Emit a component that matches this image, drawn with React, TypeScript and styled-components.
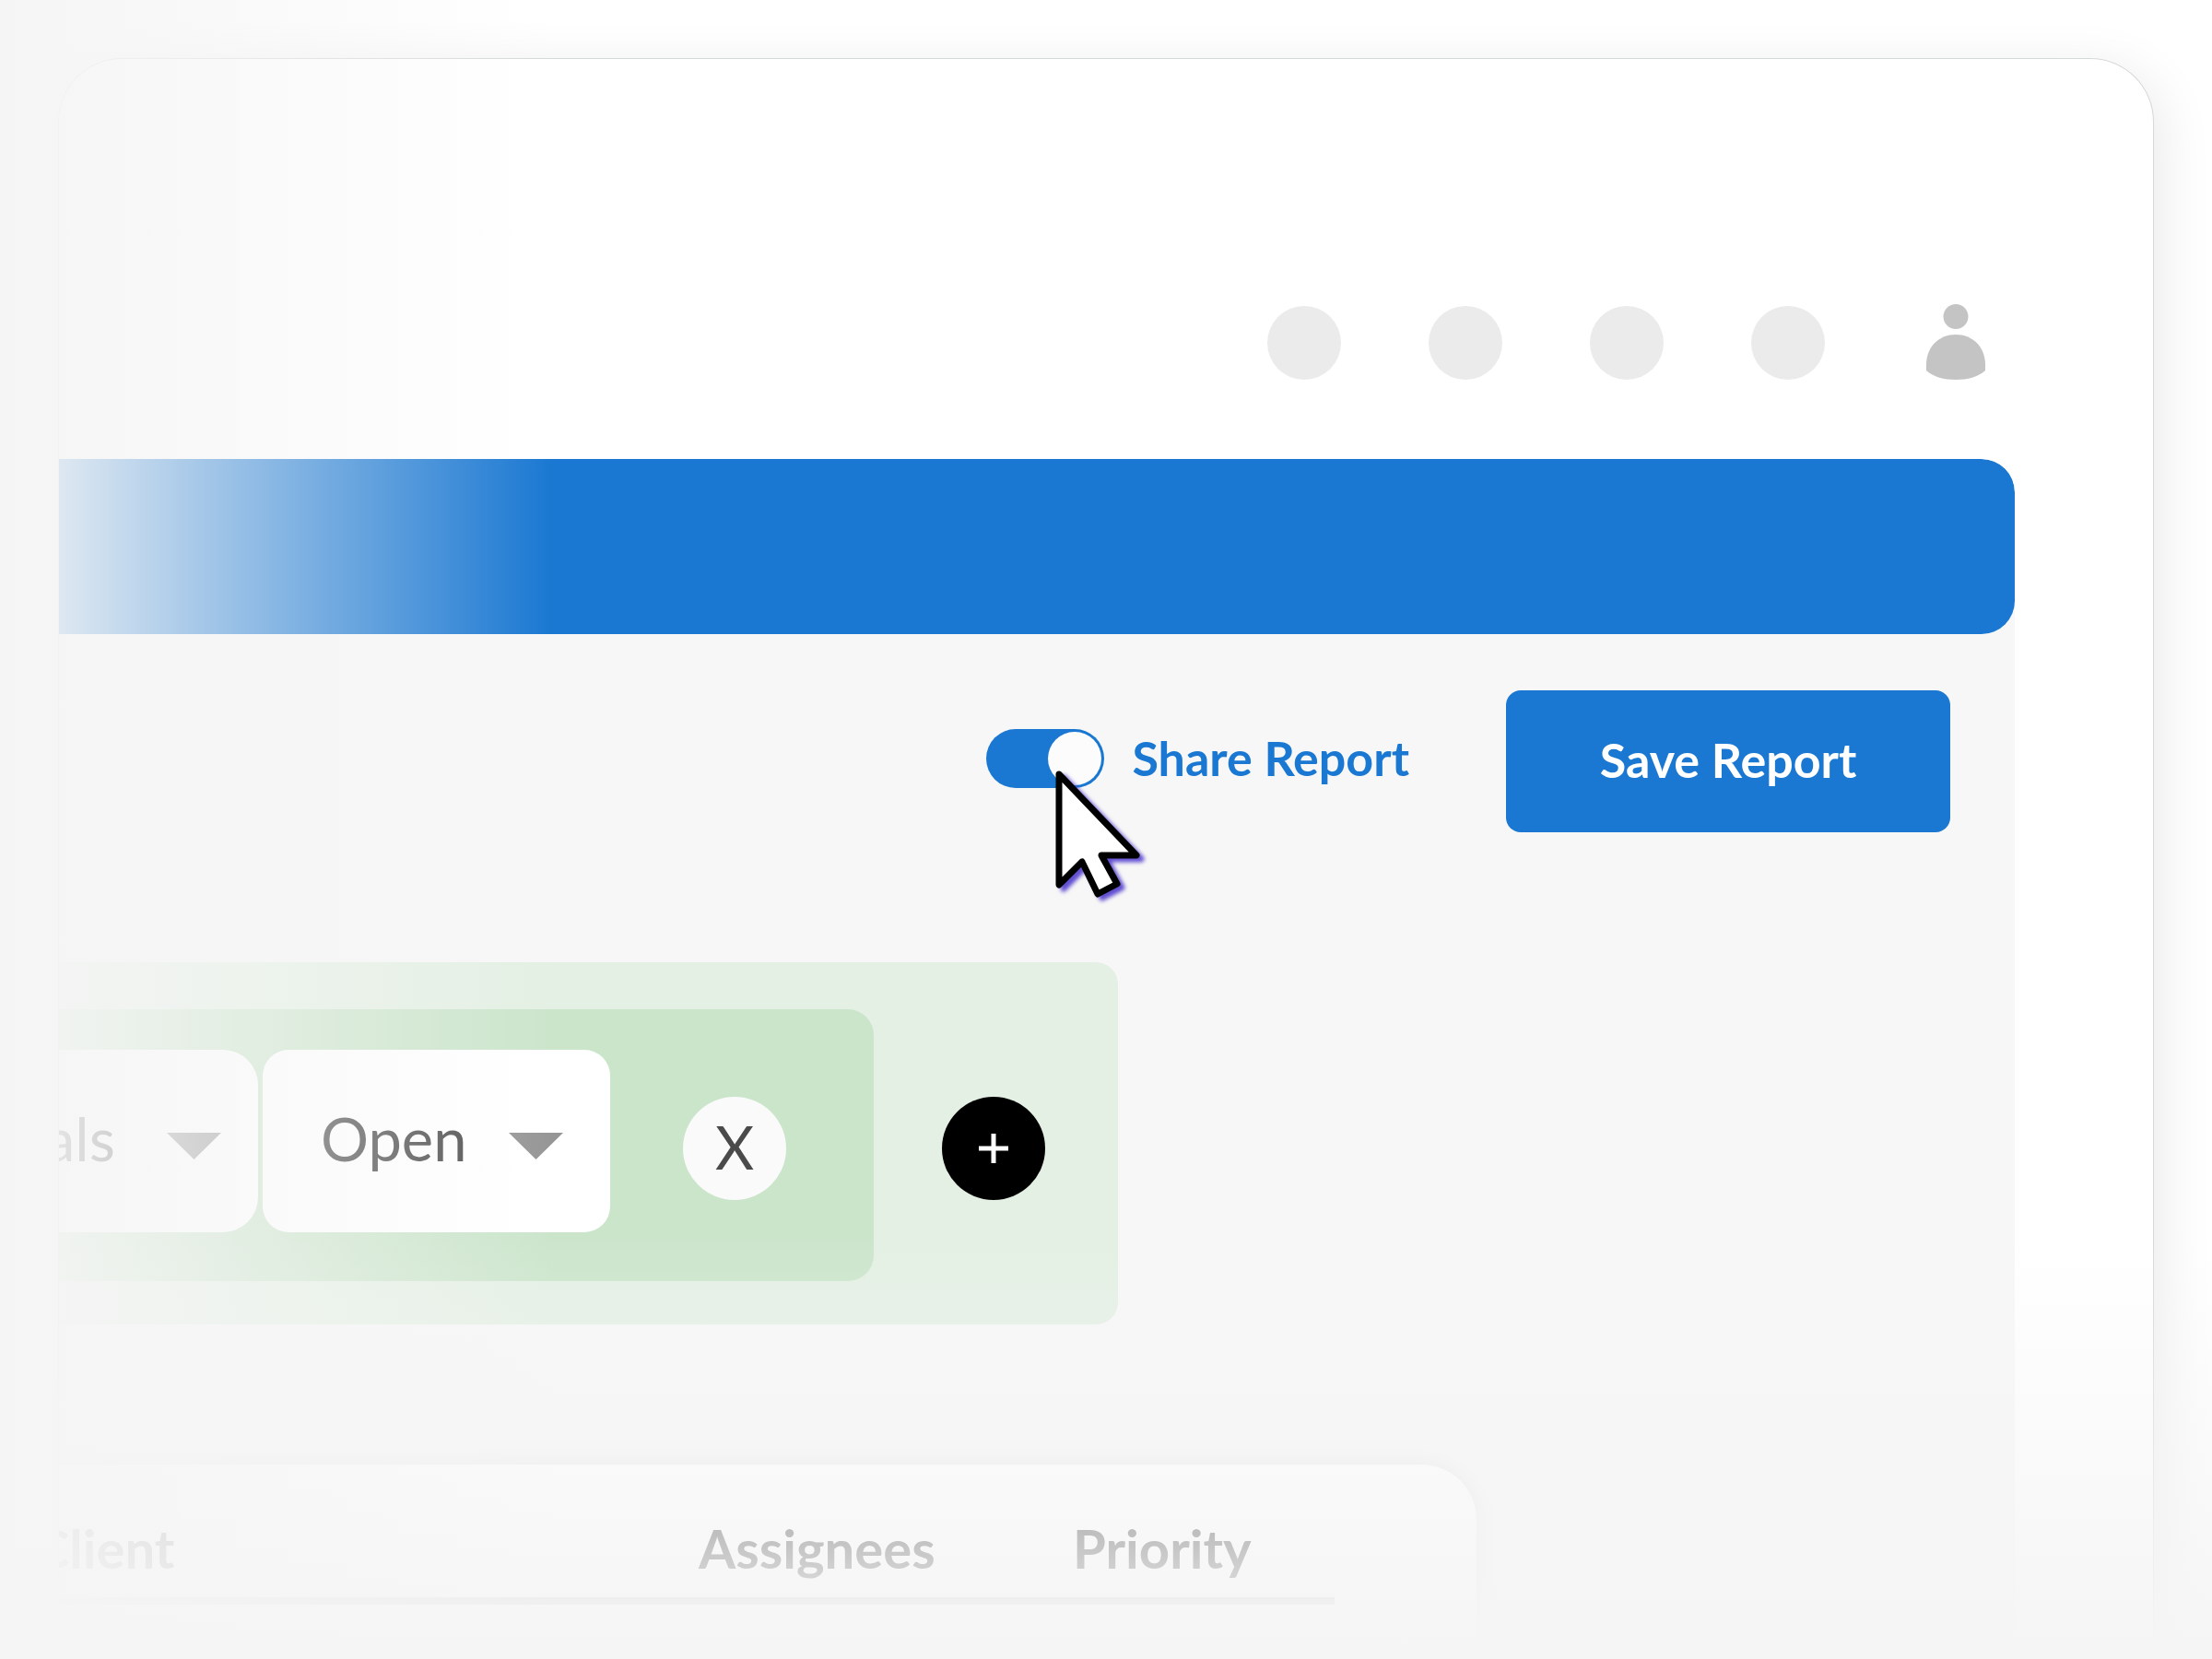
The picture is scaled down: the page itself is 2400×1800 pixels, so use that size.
import React, { useState } from "react";
import styled, { createGlobalStyle } from "styled-components";

const BLUE = "#1a78d2";
const HAZE = "245, 245, 245";

const GlobalStyle = createGlobalStyle`
  *, *::before, *::after { box-sizing: border-box; }
  body {
    margin: 0;
    background: #ffffff;
    font-family: Lato, "Open Sans", sans-serif;
  }
  button, select, input { font: inherit; }
`;

const Page = styled.div`
  position: relative;
  display: flex;
  min-height: 100vh;
  padding: 64px 64px 0;
  overflow: hidden;
`;

const Fade = styled.div`
  position: absolute;
  inset: 0;
  pointer-events: none;
  background:
    linear-gradient(to top, rgb(${HAZE}) 10px, rgba(${HAZE}, 0) 460px),
    linear-gradient(to right, rgb(${HAZE}), rgba(${HAZE}, 0) 600px);
`;

const Window = styled.div`
  flex: 1;
  min-width: 0;
  display: flex;
  flex-direction: column;
  background: #ffffff;
  border-radius: 68px 68px 0 0;
  box-shadow: 0 0 0 1px #d6d9d9, 8px 12px 60px rgba(0, 0, 0, 0.09);
`;

const Header = styled.header`
  display: flex;
  justify-content: flex-end;
  align-items: flex-end;
  gap: 95px;
  padding: 266px 182px 86px 0;
`;

const Dot = styled.span`
  width: 80px;
  height: 80px;
  border-radius: 50%;
  background: #ebebeb;
`;

const PersonIcon = styled.svg`
  width: 64px;
  height: 82px;
  margin-left: 15px;
  fill: #c4c4c4;
`;

const Panel = styled.main`
  flex: 1;
  display: flex;
  flex-direction: column;
  align-items: flex-start;
  margin-right: 150px;
  border-top-right-radius: 36px;
  background: #f7f7f7;
  overflow: hidden;
`;

const Banner = styled.div`
  align-self: stretch;
  height: 190px;
  border-radius: 0 36px 36px 0;
  background: ${BLUE};
`;

const Toolbar = styled.div`
  align-self: stretch;
  display: flex;
  justify-content: flex-end;
  align-items: center;
  gap: 105px;
  padding: 61px 70px 0 0;
`;

const ToggleField = styled.div`
  position: relative;
  display: flex;
  align-items: center;
  gap: 30px;
  padding-bottom: 6px;
`;

const Toggle = styled.input`
  appearance: none;
  display: flex;
  justify-content: flex-start;
  width: 128px;
  height: 64px;
  margin: 0;
  padding: 3px;
  border-radius: 32px;
  background: #b8b8b8;
  cursor: pointer;

  &::before {
    content: "";
    width: 58px;
    height: 58px;
    border-radius: 50%;
    background: #fcfcfc;
  }

  &:checked {
    justify-content: flex-end;
    background: ${BLUE};
  }
`;

const ToggleLabel = styled.label`
  padding-bottom: 2px;
  font-size: 52px;
  line-height: 62px;
  font-weight: 700;
  color: ${BLUE};
`;

const Pointer = styled.svg`
  position: absolute;
  left: 70px;
  top: 40px;
  width: 110px;
  height: 150px;
  pointer-events: none;
  filter: drop-shadow(5px 4px 2px rgba(80, 60, 205, 0.9));
`;

const SaveButton = styled.button`
  width: 482px;
  height: 154px;
  padding: 0 0 4px;
  border: 0;
  border-radius: 16px;
  background: ${BLUE};
  color: #ffffff;
  font-size: 52px;
  line-height: 62px;
  font-weight: 700;
  cursor: pointer;
`;

const FilterBar = styled.section`
  display: flex;
  align-items: center;
  gap: 74px;
  margin: 141px 0 0 -128px;
  padding: 51px 79px 47px 0;
  border-radius: 24px;
  background: #e4f0e4;
`;

const FilterGroup = styled.div`
  display: flex;
  align-items: center;
  padding: 44px 95px 53px 50px;
  border-radius: 28px;
  background: #cbe5cb;
`;

const Pill = styled.div<{ $width: number; $radius: number; $inset: number }>`
  display: grid;
  align-items: center;
  width: ${(p) => p.$width}px;
  height: 198px;
  margin-right: 5px;
  border-radius: ${(p) => p.$radius}px;
  background: #ffffff;

  > * { grid-area: 1 / 1; }
  > svg { margin-right: ${(p) => p.$inset}px; }
`;

const PillSelect = styled.select`
  appearance: none;
  width: 100%;
  height: 100%;
  padding: 0 0 6px 63px;
  border: 0;
  border-radius: inherit;
  background: transparent;
  color: #4a4a4a;
  font-size: 65px;
  line-height: 78px;
  cursor: pointer;
`;

const Caret = styled.svg`
  justify-self: end;
  width: 59px;
  height: 29px;
  margin-top: 11px;
  fill: #969696;
  pointer-events: none;
`;

const RoundButton = styled.button<{ $dark?: boolean }>`
  display: flex;
  align-items: center;
  justify-content: center;
  width: 112px;
  height: 112px;
  margin: ${(p) => (p.$dark ? "6px 0 0" : "16px 0 0 74px")};
  padding: 0 0 4px;
  border: 0;
  border-radius: 50%;
  background: ${(p) => (p.$dark ? "#000000" : "#fafafa")};
  color: ${(p) => (p.$dark ? "#ffffff" : "#4a4a4a")};
  font-size: 65px;
  line-height: 78px;
  cursor: pointer;
`;

const PlusIcon = styled.svg`
  width: 32px;
  height: 32px;
  margin-top: 5px;
  stroke: currentColor;
  stroke-width: 5;
`;

const TableCard = styled.section`
  flex: 1;
  margin: 152px 0 0 -97px;
  padding: 0 154px 0 70px;
  border-top-right-radius: 60px;
  background: #ffffff;
  box-shadow: 0 0 18px 4px rgba(0, 0, 0, 0.06);
`;

const Table = styled.table`
  table-layout: fixed;
  width: 1411px;
  border-collapse: collapse;
`;

const HeadCell = styled.th<{ $width: number }>`
  width: ${(p) => p.$width}px;
  padding: 56px 0 18px;
  border-bottom: 8px solid #c4c4c4;
  text-align: left;
  font-size: 58px;
  line-height: 70px;
  font-weight: 700;
  color: #363636;
`;

const columns = [
  { name: "Client", width: 721 },
  { name: "Assignees", width: 406 },
  { name: "Priority", width: 284 },
];

const filters = [
  { label: "Record type", value: "als", width: 294, radius: 38, inset: 40 },
  { label: "Status", value: "Open", width: 377, radius: 28, inset: 51 },
];

function DownCaret() {
  return (
    <Caret viewBox="0 0 59 29" aria-hidden="true">
      <path d="M0 0H59L29.500 29Z" />
    </Caret>
  );
}

export default function App() {
  const [shared, setShared] = useState(true);

  return (
    <>
      <GlobalStyle />
      <Page>
        <Window>
          <Header>
            <Dot />
            <Dot />
            <Dot />
            <Dot />
            <PersonIcon viewBox="0 0 64 82" role="img" aria-label="Account">
              <circle cx="32" cy="13.500" r="13.500" />
              <path d="M0 66C0 46 14 33 32 33C50 33 64 46 64 66V72C56 79 45 82 32 82C19 82 8 79 0 72Z" />
            </PersonIcon>
          </Header>
          <Panel>
            <Banner />
            <Toolbar>
              <ToggleField>
                <Toggle
                  id="share-report"
                  type="checkbox"
                  checked={shared}
                  onChange={(e) => setShared(e.target.checked)}
                />
                <ToggleLabel htmlFor="share-report">Share Report</ToggleLabel>
                <Pointer viewBox="0 0 110 150" aria-hidden="true">
                  <path
                    d="M9 9L93 97H55L72 128L51 139L34 104L9 129Z"
                    fill="#ffffff"
                    stroke="#000000"
                    strokeWidth="7"
                    strokeLinejoin="round"
                  />
                </Pointer>
              </ToggleField>
              <SaveButton type="button">Save Report</SaveButton>
            </Toolbar>
            <FilterBar>
              <FilterGroup>
                {filters.map((f) => (
                  <Pill key={f.label} $width={f.width} $radius={f.radius} $inset={f.inset}>
                    <PillSelect aria-label={f.label} defaultValue={f.value}>
                      <option>{f.value}</option>
                    </PillSelect>
                    <DownCaret />
                  </Pill>
                ))}
                <RoundButton type="button" aria-label="Remove filter">X</RoundButton>
              </FilterGroup>
              <RoundButton type="button" $dark aria-label="Add filter">
                <PlusIcon viewBox="0 0 32 32" aria-hidden="true">
                  <path d="M0 16H32M16 0V32" />
                </PlusIcon>
              </RoundButton>
            </FilterBar>
            <TableCard>
              <Table>
                <thead>
                  <tr>
                    {columns.map((c) => (
                      <HeadCell key={c.name} scope="col" $width={c.width}>
                        {c.name}
                      </HeadCell>
                    ))}
                  </tr>
                </thead>
              </Table>
            </TableCard>
          </Panel>
        </Window>
        <Fade />
      </Page>
    </>
  );
}
